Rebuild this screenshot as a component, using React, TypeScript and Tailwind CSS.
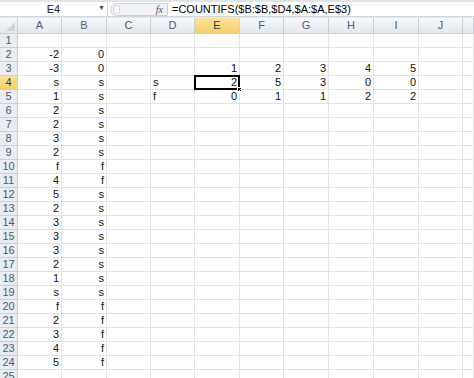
import React from "react";

const cols = ["A", "B", "C", "D", "E", "F", "G", "H", "I", "J", ""];

// [A, B] for rows 1..25
const ab: [string, string][] = [
  ["", ""],
  ["-2", "0"],
  ["-3", "0"],
  ["s", "s"],
  ["1", "s"],
  ["2", "s"],
  ["2", "s"],
  ["3", "s"],
  ["2", "s"],
  ["f", "f"],
  ["4", "f"],
  ["5", "s"],
  ["2", "s"],
  ["3", "s"],
  ["3", "s"],
  ["3", "s"],
  ["2", "s"],
  ["1", "s"],
  ["s", "s"],
  ["f", "f"],
  ["2", "f"],
  ["3", "f"],
  ["4", "f"],
  ["5", "f"],
  ["", ""],
];

const table: Record<number, { d?: string; vals?: string[] }> = {
  3: { vals: ["1", "2", "3", "4", "5"] },
  4: { d: "s", vals: ["2", "5", "3", "0", "0"] },
  5: { d: "f", vals: ["0", "1", "1", "2", "2"] },
};

function Cell({ children, left, selected }: { children?: React.ReactNode; left?: boolean; selected?: boolean }) {
  return (
    <div
      className={`relative h-[14px] border-r border-b border-[#e0e2e4] px-[2px] text-[11px] leading-[13px] text-[#111] ${
        left ? "text-left" : "text-right"
      }`}
    >
      {children}
      {selected && (
        <>
          <div className="absolute -left-[1px] -top-[1px] right-[-1px] bottom-[-1px] border-2 border-black" />
          <div className="absolute right-[-3px] bottom-[-3px] h-[5px] w-[5px] border border-white bg-black" />
        </>
      )}
    </div>
  );
}

export default function App() {
  return (
    <div className="h-[378px] w-[474px] overflow-hidden bg-white" style={{ fontFamily: '"Liberation Sans", Arial, sans-serif' }}>
      {/* formula bar */}
      <div className="h-[2px] bg-[#dfe4ea]" />
      <div className="flex h-[14px] items-center bg-white text-[11px] text-black">
        <div className="relative flex h-full w-[108px] items-center justify-center border-r border-[#d3d9e0]">
          <span className="text-[#222]">E4</span>
          <span className="absolute right-[2px] top-[1px] text-[7px] text-[#444]">▼</span>
        </div>
        <div className="ml-[2px] flex h-[13px] w-[58px] items-center rounded-l-full border border-[#ccd2da] bg-[#f0f2f5]">
          <div className="ml-[2px] h-[9px] w-[7px] rounded-full border border-[#cdd3da] bg-white" />
          <span className="ml-auto mr-[4px] text-[10px] italic text-[#555]" style={{ fontFamily: '"Liberation Serif", serif' }}>
            fx
          </span>
        </div>
        <div className="pl-[4px] leading-[13px]">=COUNTIFS($B:$B,$D4,$A:$A,E$3)</div>
      </div>
      <div className="h-[2px] border-t border-[#cfd6de] bg-[#e6eaef]" />

      <div className="grid grid-cols-[18px_44px_45px_44px_44px_45px_44px_45px_45px_45px_44px_1fr]">
        {/* header row */}
        <div className="relative h-[16px] border-r border-b border-[#c9d0d9] bg-gradient-to-b from-[#f6f8fa] to-[#e3e8ee]">
          <svg className="absolute bottom-[2px] right-[2px]" width="9" height="9" viewBox="0 0 9 9">
            <polygon points="9,0 9,9 0,9" fill="#cdd3da" />
          </svg>
        </div>
        {cols.map((c, i) => (
          <div
            key={i}
            className={`flex h-[16px] items-center justify-center border-r border-b text-[11px] ${
              c === "E"
                ? "border-[#c9d0d9] bg-gradient-to-b from-[#fbe19a] to-[#f6cf6a] text-[#3a3a3a]"
                : "border-[#c9d0d9] bg-gradient-to-b from-[#f6f8fa] to-[#e3e8ee] text-[#4d5c70]"
            }`}
          >
            {c}
          </div>
        ))}

        {ab.map(([a, b], idx) => {
          const r = idx + 1;
          const t = table[r];
          return (
            <React.Fragment key={r}>
              <div
                className={`flex h-[14px] items-center justify-center border-r border-b text-[11px] ${
                  r === 4
                    ? "border-[#c9d0d9] bg-gradient-to-b from-[#fbe19a] to-[#f6cf6a] text-[#3a3a3a]"
                    : "border-[#c9d0d9] bg-[#e9edf2] text-[#4d5c70]"
                }`}
              >
                {r}
              </div>
              <Cell>{a}</Cell>
              <Cell>{b}</Cell>
              <Cell />
              <Cell left>{t?.d}</Cell>
              {[0, 1, 2, 3, 4].map((k) => (
                <Cell key={k} selected={r === 4 && k === 0}>
                  {t?.vals?.[k]}
                </Cell>
              ))}
              <Cell />
              <Cell />
            </React.Fragment>
          );
        })}
      </div>
    </div>
  );
}
